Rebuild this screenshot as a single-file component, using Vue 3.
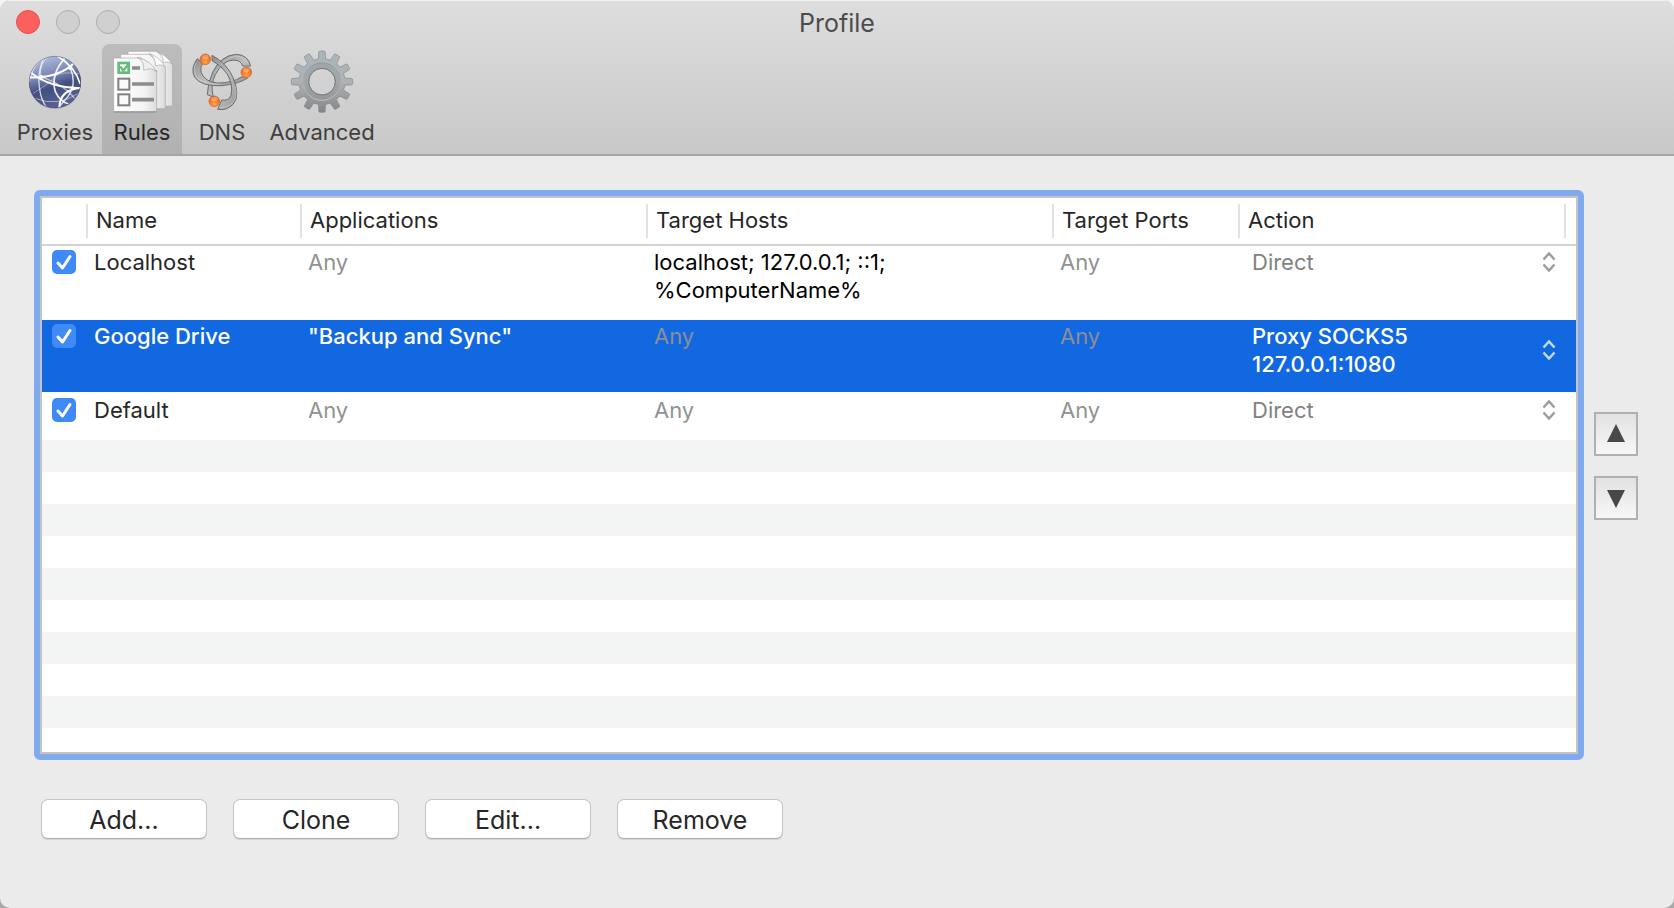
<script setup>
import { ref } from 'vue'

const columns = [
  { key: 'on', label: '' },
  { key: 'name', label: 'Name' },
  { key: 'apps', label: 'Applications' },
  { key: 'hosts', label: 'Target Hosts' },
  { key: 'ports', label: 'Target Ports' },
  { key: 'action', label: 'Action' },
]

const rules = ref([
  { name: 'Localhost', on: true, apps: '', hosts: 'localhost; 127.0.0.1; ::1; %ComputerName%', ports: '', action: ['Direct'] },
  { name: 'Google Drive', on: true, apps: '"Backup and Sync"', hosts: '', ports: '', action: ['Proxy SOCKS5', '127.0.0.1:1080'] },
  { name: 'Default', on: true, apps: '', hosts: '', ports: '', action: ['Direct'] },
])
const selected = ref(1)
const actionOptions = ['Direct', 'Proxy SOCKS5 127.0.0.1:1080']
const commands = ['Add...', 'Clone', 'Edit...', 'Remove']

function polar(r, deg) {
  const a = ((deg - 90) * Math.PI) / 180
  return `${(426 + r * Math.cos(a)).toFixed(1)},${(155 + r * Math.sin(a)).toFixed(1)}`
}
let gear = ''
for (let i = 0; i < 12; i++) {
  const c = i * 30
  gear += `${i ? 'L' : 'M'}${polar(69, c - 9)} L${polar(90, c - 6)} Q${polar(93, c - 5)} ${polar(92, c - 3)} L${polar(92, c + 3)} Q${polar(93, c + 5)} ${polar(90, c + 6)} L${polar(69, c + 9)} A69,69 0 0 1 ${polar(69, c + 21)} `
}
gear += 'Z M426,115 a40,40 0 1 0 0.1,0 Z'
</script>

<template>
  <div class="window">
    <header class="chrome">
      <div class="titlebar">
        <div class="lights">
          <button class="light close" aria-label="Close"></button>
          <button class="light" aria-label="Minimize"></button>
          <button class="light" aria-label="Zoom"></button>
        </div>
        <h1>Profile</h1>
      </div>
      <nav class="toolbar">
        <button class="tool proxies">
          <svg viewBox="69 150 192 192" aria-hidden="true">
            <defs>
              <linearGradient id="globe" x1="0.3" y1="0" x2="0.6" y2="1">
                <stop offset="0" stop-color="#b4bddb" />
                <stop offset="0.35" stop-color="#7b88b8" />
                <stop offset="0.6" stop-color="#424e7e" />
                <stop offset="1" stop-color="#5a6698" />
              </linearGradient>
              <clipPath id="globeClip"><circle cx="165" cy="246" r="77" /></clipPath>
            </defs>
            <circle cx="165" cy="249" r="78" fill="#000" opacity="0.2" />
            <circle cx="165" cy="246" r="78" fill="url(#globe)" />
            <g clip-path="url(#globeClip)" fill="none" stroke="#fff" stroke-linecap="round">
              <path d="M88,244 Q100,190 130,176 Q112,220 118,260 Q122,300 140,322" stroke-width="4" opacity="0.75" />
              <path d="M90,216 Q150,265 245,264" stroke-width="5" />
              <path d="M88,232 Q175,236 226,186" stroke-width="6" />
              <path d="M196,172 Q150,225 166,275 Q180,305 206,312" stroke-width="5" opacity="0.9" />
              <path d="M172,168 Q225,200 240,250" stroke-width="5" />
              <path d="M211,204 Q232,255 202,292 Q188,308 176,322" stroke-width="4" opacity="0.85" />
              <path d="M244,264 Q180,268 178,322" stroke-width="6" />
              <path d="M122,230 Q195,255 226,298" stroke-width="4" opacity="0.6" />
              <path d="M100,280 Q140,258 172,224 Q196,214 240,222" stroke-width="3" opacity="0.4" />
              <path d="M122,230 Q116,190 146,170" stroke-width="3" opacity="0.6" />
              <path d="M108,296 Q170,322 236,280" stroke-width="3" opacity="0.5" />
            </g>
            <circle cx="124" cy="231" r="6" fill="#fff" />
            <circle cx="211" cy="204" r="6" fill="#fff" />
            <circle cx="217" cy="263" r="5" fill="#fff" />
            <circle cx="165" cy="246" r="77" fill="none" stroke="#333d66" stroke-width="2" opacity="0.6" />
          </svg>
          <span>Proxies</span>
        </button>
        <button class="tool rules active">
          <svg viewBox="330 150 192 192" aria-hidden="true">
            <defs>
              <linearGradient id="sheet" x1="0" y1="0" x2="1" y2="0">
                <stop offset="0" stop-color="#fff" />
                <stop offset="0.7" stop-color="#f4f4f4" />
                <stop offset="1" stop-color="#dcdcdc" />
              </linearGradient>
            </defs>
            <g fill="url(#sheet)" stroke="#a6a6a6" stroke-width="2" stroke-linejoin="round">
              <path d="M384,154 H470 L518,194 V318 H384 Z" />
              <path d="M470,154 Q490,162 490,188 Q508,182 518,194 Q500,166 470,154 Z" fill="#fff" />
              <path d="M362,163 H447 L496,202 V326 H362 Z" />
              <path d="M447,160 Q468,172 466,198 Q486,190 496,202 Q480,172 447,160 Z" fill="#fff" />
              <path d="M341,174 H424 L470,212 V335 H341 Z" />
              <path d="M412,172 Q434,182 431,211 Q454,200 470,216 Q452,180 412,172 Z" fill="#eee" />
            </g>
            <path d="M341,336 H470" stroke="#8c8c8c" stroke-width="3" />
            <rect x="352" y="185" width="38" height="37" fill="#62bd78" />
            <rect x="360" y="193" width="22" height="21" fill="#fff" />
            <path d="M361,199 L370,212 L387,190" fill="none" stroke="#62bd78" stroke-width="7" />
            <g fill="#fafafa" stroke="#808080" stroke-width="6">
              <rect x="355" y="236" width="33" height="33" />
              <rect x="355" y="283" width="33" height="33" />
            </g>
            <path d="M396,204 H420 M396,252 H462 M396,299 H462" stroke="#8c8c8c" stroke-width="11" />
          </svg>
          <span>Rules</span>
        </button>
        <button class="tool dns">
          <svg viewBox="30 60 192 192" aria-hidden="true">
            <defs>
              <linearGradient id="steel" x1="0" y1="0" x2="1" y2="1">
                <stop offset="0" stop-color="#8d8d8d" />
                <stop offset="0.5" stop-color="#bdbdbd" />
                <stop offset="1" stop-color="#969696" />
              </linearGradient>
              <radialGradient id="ball" cx="0.5" cy="0.75" r="0.7">
                <stop offset="0" stop-color="#ffa544" />
                <stop offset="0.6" stop-color="#f97825" />
                <stop offset="1" stop-color="#e65c1c" />
              </radialGradient>
            </defs>
            <g fill="url(#steel)" stroke="#6c6c6c" stroke-width="3" stroke-linejoin="round">
              <path d="M212,108 Q204,75 170,73 Q124,75 99,125 Q82,160 82,194 L100,201 Q90,165 106,134 Q128,90 162,90 Q184,92 188,108 Z" />
              <path d="M52,86 Q30,116 44,142 Q64,170 125,167 Q176,162 203,144 L186,140 Q156,160 112,159 Q74,156 63,126 Q60,112 68,101 Z" />
              <path d="M96,76 Q138,98 158,140 Q182,196 160,222 Q140,243 113,238 L125,210 Q146,214 153,196 Q160,166 142,132 Q124,106 96,92 Z" />
            </g>
            <g fill="none" stroke="#e0e0e0" stroke-width="2" opacity="0.7">
              <path d="M204,101 Q194,80 168,78 Q130,82 104,130" />
              <path d="M48,98 Q36,122 52,144 Q72,164 120,163" />
              <path d="M166,170 Q174,204 156,220 Q142,234 122,233" />
            </g>
            <g fill="url(#ball)" stroke="#c06a34" stroke-width="2">
              <circle cx="76" cy="88" r="16" />
              <circle cx="199" cy="127" r="16" />
              <circle cx="103" cy="214" r="16" />
            </g>
            <g fill="#fff" opacity="0.3">
              <ellipse cx="76" cy="81" rx="10" ry="7" />
              <ellipse cx="199" cy="120" rx="10" ry="7" />
              <ellipse cx="103" cy="207" rx="10" ry="7" />
            </g>
          </svg>
          <span>DNS</span>
        </button>
        <button class="tool advanced">
          <svg viewBox="330 60 192 192" aria-hidden="true">
            <defs>
              <linearGradient id="gearFill" x1="0" y1="0" x2="0" y2="1">
                <stop offset="0" stop-color="#aab5b9" />
                <stop offset="0.5" stop-color="#afb3b5" />
                <stop offset="1" stop-color="#858585" />
              </linearGradient>
              <linearGradient id="gearRing" x1="0" y1="0" x2="0" y2="1">
                <stop offset="0" stop-color="#8a9498" />
                <stop offset="1" stop-color="#c0c3c4" />
              </linearGradient>
            </defs>
            <path :d="gear" fill="url(#gearFill)" fill-rule="evenodd" stroke="#83888b" stroke-width="2" />
            <circle cx="426" cy="155" r="56" fill="none" stroke="url(#gearRing)" stroke-width="3" />
            <circle cx="426" cy="155" r="47" fill="none" stroke="#939a9d" stroke-width="13" opacity="0.5" />
            <circle cx="426" cy="155" r="40" fill="none" stroke="#777d80" stroke-width="3" />
          </svg>
          <span>Advanced</span>
        </button>
      </nav>
    </header>

    <main class="content">
      <div class="editor">
        <div class="frame">
          <table>
            <colgroup>
              <col v-for="c in columns" :key="c.key" :class="`col-${c.key}`" />
            </colgroup>
            <thead>
              <tr>
                <th v-for="c in columns" :key="c.key" :class="c.key" scope="col"><div>{{ c.label }}</div></th>
              </tr>
            </thead>
            <tbody>
              <tr v-for="(r, i) in rules" :key="r.name" :class="{ selected: i === selected }" @click="selected = i">
                <td class="on">
                  <label class="check">
                    <input v-model="r.on" type="checkbox" :aria-label="`Enable ${r.name}`" />
                    <svg v-if="r.on" viewBox="0 0 24 24" aria-hidden="true"><path d="M6 13 L10.5 18 L18 6.5" /></svg>
                  </label>
                </td>
                <td class="name">{{ r.name }}</td>
                <td :class="{ any: !r.apps }">{{ r.apps || 'Any' }}</td>
                <td class="hosts" :class="{ any: !r.hosts }">{{ r.hosts || 'Any' }}</td>
                <td :class="{ any: !r.ports }">{{ r.ports || 'Any' }}</td>
                <td class="action">
                  <div class="picker">
                    <div><div v-for="line in r.action" :key="line">{{ line }}</div></div>
                    <svg viewBox="0 0 14 20" aria-hidden="true"><path d="M1.500 7.500 L7 1.500 L12.500 7.500 M1.500 12.500 L7 18.500 L12.500 12.500" /></svg>
                    <select :aria-label="`Action for ${r.name}`" :value="r.action.join(' ')">
                      <option v-for="o in actionOptions" :key="o">{{ o }}</option>
                    </select>
                  </div>
                </td>
              </tr>
            </tbody>
          </table>
          <div class="stripes"></div>
        </div>
        <div class="order">
          <button aria-label="Move up"><svg viewBox="0 0 18 20"><path d="M9 0 L18 18 H0 Z" /></svg></button>
          <button aria-label="Move down"><svg viewBox="0 0 18 20"><path d="M0 2 H18 L9 20 Z" /></svg></button>
        </div>
      </div>
      <div class="commands">
        <button v-for="c in commands" :key="c">{{ c }}</button>
      </div>
    </main>
  </div>
</template>

<style>
body {
  background: linear-gradient(#f4f4f4, #a8a8a8);
}
</style>

<style scoped>
* {
  box-sizing: border-box;
}
.window {
  min-height: 100vh;
  display: flex;
  flex-direction: column;
  background: #ebebeb;
  border-radius: 10px;
  overflow: hidden;
  font-family: Inter, "Liberation Sans", sans-serif;
  font-size: 22px;
  line-height: 28px;
  color: #262626;
}
button {
  font: inherit;
  color: inherit;
  padding: 0;
  border: 0;
  background: none;
}
.chrome {
  background: linear-gradient(#dedede, #c8c8c8);
  border-bottom: 2px solid #a6a6a6;
  box-shadow: inset 0 1px 0 #f0f0f0;
}
.titlebar {
  display: grid;
  grid-template-columns: 1fr auto 1fr;
  align-items: center;
  height: 44px;
  padding: 0 16px;
}
.lights {
  display: flex;
  gap: 16px;
}
.light {
  width: 24px;
  height: 24px;
  border-radius: 50%;
  border: 1px solid #adadad;
  background: #d0d0d0;
}
.light.close {
  border-color: #e2504b;
  background: #fc605c;
}
h1 {
  margin: 0;
  padding-top: 2px;
  font-size: 25px;
  font-weight: 400;
  color: #4c4c4c;
}
.toolbar {
  display: flex;
  padding-left: 8px;
}
.tool {
  display: flex;
  flex-direction: column;
  align-items: center;
  gap: 4px;
  padding: 6px 0 8px;
  color: #3f3f3f;
}
.tool svg {
  width: 64px;
  height: 64px;
}
.proxies {
  width: 94px;
}
.rules,
.dns {
  width: 80px;
}
.advanced {
  width: 120px;
}
.tool.active {
  background: linear-gradient(#bcbcbc, #b1b1b1);
  border-radius: 8px 8px 0 0;
  color: #262626;
}
.content {
  flex: 1;
  display: flex;
  flex-direction: column;
  gap: 39px;
  padding: 34px 36px 69px 34px;
}
.editor {
  flex: 1;
  display: flex;
  gap: 10px;
}
.frame {
  flex: 1;
  display: flex;
  flex-direction: column;
  border: 6px solid #80aaee;
  border-radius: 6px;
  background: #fff;
  padding: 2px;
  box-shadow: inset 0 0 0 2px #c4c4c4;
}
table {
  width: 100%;
  table-layout: fixed;
  border-collapse: separate;
  border-spacing: 0;
}
.col-on { width: 46px; }
.col-name { width: 214px; }
.col-apps { width: 346px; }
.col-hosts { width: 406px; }
.col-ports { width: 186px; }
th {
  padding: 6px 0;
  border-bottom: 2px solid #d4d4d4;
  font-weight: 400;
  text-align: left;
}
th div {
  height: 34px;
  line-height: 32px;
  padding-left: 8px;
  border-right: 2px solid #e2e2e2;
}
th.action div {
  margin-right: 10px;
}
td {
  height: 74px;
  padding: 2px 6px 0;
  vertical-align: top;
  border-bottom: 2px solid #fff;
}
tr:last-child td {
  height: 46px;
  border-bottom: 0;
}
td.hosts {
  color: #000;
}
td.any {
  color: #929292;
}
td.on {
  padding: 4px 10px 0;
}
td.action {
  padding: 2px 20px 0 12px;
  color: #828282;
}
.selected td {
  background: #1168e0;
  color: #fff;
  font-weight: 500;
}
.selected td.action {
  color: #fff;
}
.selected td.any {
  color: #8e8e93;
  font-weight: 400;
}
.check {
  display: grid;
  width: 24px;
  height: 24px;
}
.check input,
.check svg {
  grid-area: 1 / 1;
  width: 24px;
  height: 24px;
  margin: 0;
}
.check input {
  appearance: none;
  border-radius: 5px;
  background: #408af8;
}
.check svg {
  pointer-events: none;
  fill: none;
  stroke: #fff;
  stroke-width: 3;
  stroke-linecap: round;
  stroke-linejoin: round;
}
.picker {
  position: relative;
  display: flex;
  align-items: center;
  justify-content: space-between;
}
.picker svg {
  width: 14px;
  height: 20px;
  fill: none;
  stroke: #9d9d9d;
  stroke-width: 2.5;
}
.selected .picker svg {
  stroke: #c4daf7;
}
.picker select {
  position: absolute;
  inset: 0;
  width: 100%;
  opacity: 0;
}
.stripes {
  flex: 1;
  background: repeating-linear-gradient(#f3f5f4 0 32px, #fff 32px 64px);
}
.order {
  display: flex;
  flex-direction: column;
  gap: 20px;
  padding-top: 222px;
}
.order button {
  display: grid;
  place-items: center;
  width: 44px;
  height: 44px;
  border: 2px solid #b0b0b0;
  background: linear-gradient(#e2e2e2, #f7f7f7);
}
.order svg {
  width: 18px;
  height: 20px;
  fill: #484848;
}
.commands {
  display: flex;
  gap: 26px;
  padding-left: 7px;
}
.commands button {
  width: 166px;
  height: 40px;
  padding-top: 2px;
  border: 1px solid #c6c6c6;
  border-bottom-color: #acacac;
  border-radius: 7px;
  background: #fff;
  box-shadow: 0 1px 1px #0000001a;
  font-size: 25px;
}
</style>
